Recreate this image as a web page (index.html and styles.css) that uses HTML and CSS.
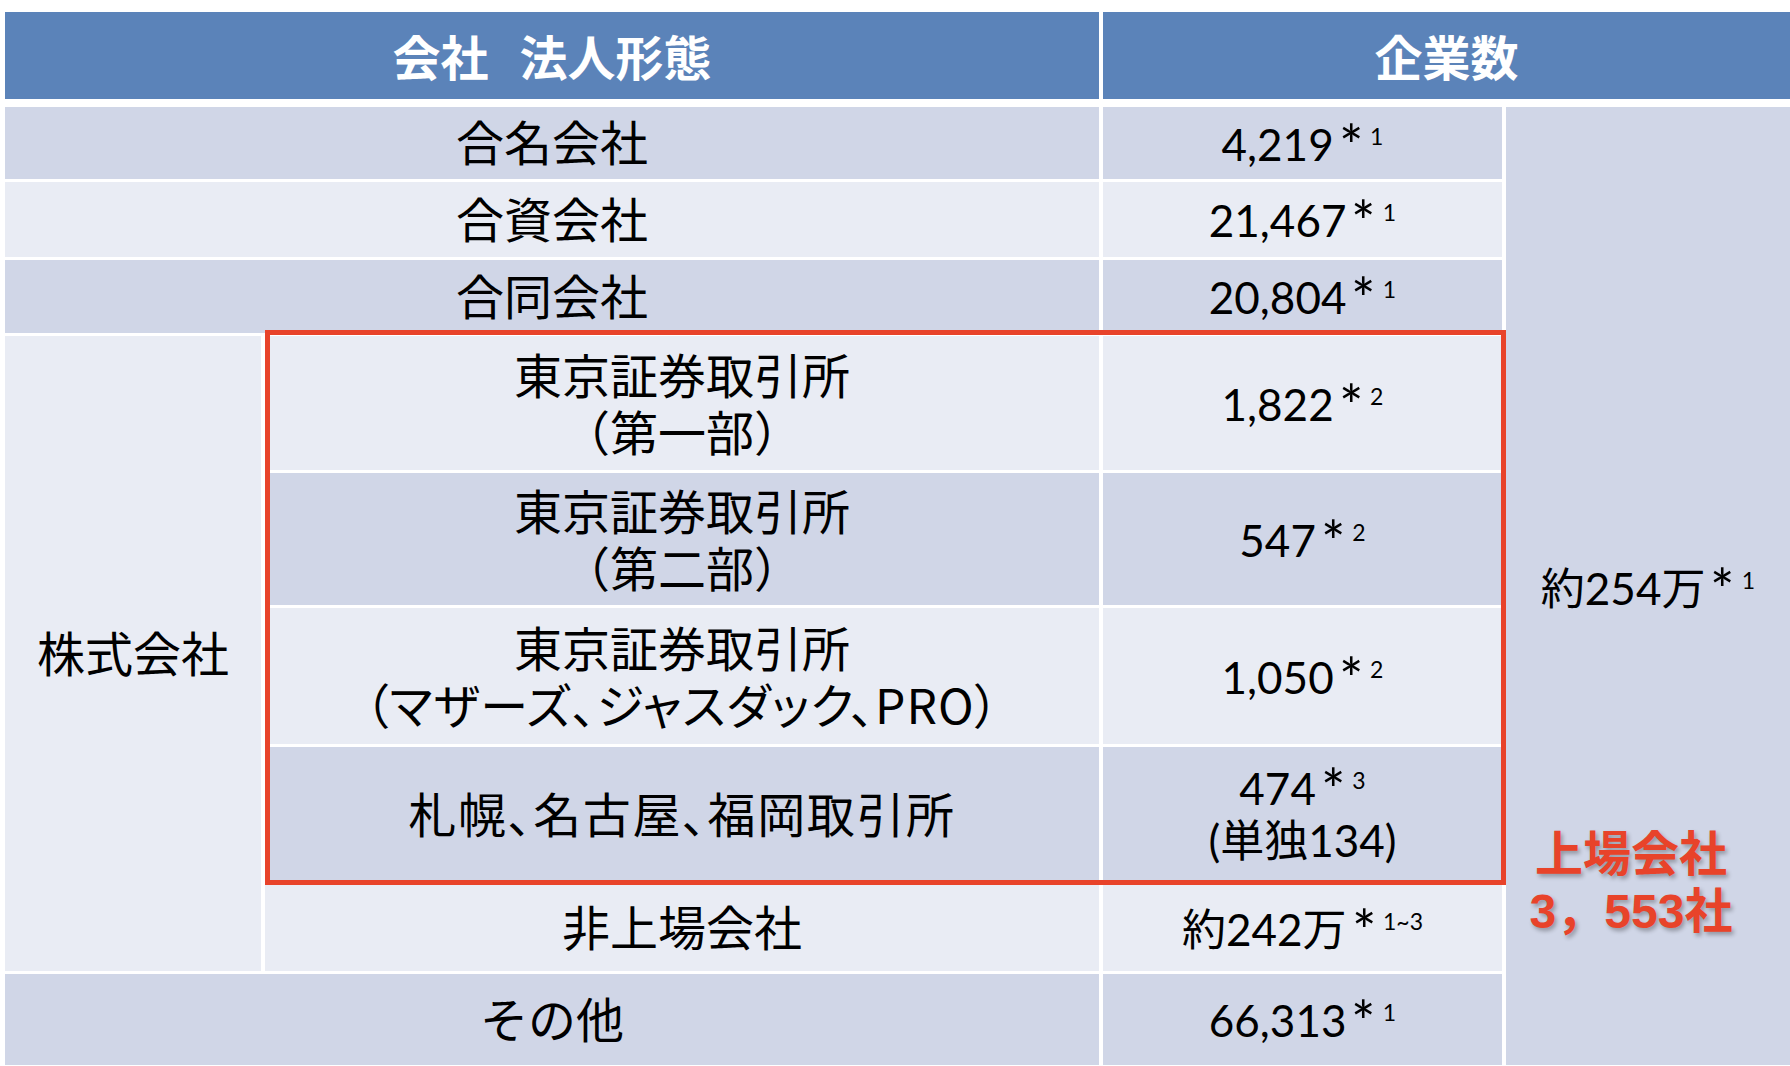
FILE: index.html
```html
<!DOCTYPE html>
<html lang="ja">
<head>
<meta charset="utf-8">
<title>会社 法人形態</title>
<link rel="stylesheet" href="styles.css">
</head>
<body>
<div class="sheet">
  <div class="head">
    <div class="hcell span2">会社 法人形態</div>
    <div class="hcell span2">企業数</div>
  </div>
  <div class="grid">
    <div class="cell jp span2 dark"><div class="in">合名会社</div></div>
    <div class="cell num dark"><div class="in">4,219<span class="ast">*</span><span class="sup">1</span></div></div>
    <div class="cell num dark total"><div class="in">約254万<span class="ast">*</span><span class="sup">1</span></div></div>

    <div class="cell jp span2 light"><div class="in">合資会社</div></div>
    <div class="cell num light"><div class="in">21,467<span class="ast">*</span><span class="sup">1</span></div></div>

    <div class="cell jp span2 dark"><div class="in">合同会社</div></div>
    <div class="cell num dark"><div class="in">20,804<span class="ast">*</span><span class="sup">1</span></div></div>

    <div class="cell jp light kabu"><div class="in">株式会社</div></div>
    <div class="cell jp two light"><div class="in">東京証券取引所<br>（第一部）</div></div>
    <div class="cell num light"><div class="in">1,822<span class="ast">*</span><span class="sup">2</span></div></div>

    <div class="cell jp two dark"><div class="in">東京証券取引所<br>（第二部）</div></div>
    <div class="cell num dark"><div class="in">547<span class="ast">*</span><span class="sup">2</span></div></div>

    <div class="cell jp two light"><div class="in">東京証券取引所<br><span class="palt">（マザーズ、ジャスダック、PRO）</span></div></div>
    <div class="cell num light"><div class="in">1,050<span class="ast">*</span><span class="sup">2</span></div></div>

    <div class="cell jp dark"><div class="in wide">札幌、名古屋、福岡取引所</div></div>
    <div class="cell num two dark"><div class="in">474<span class="ast">*</span><span class="sup">3</span><br>(単独134)</div></div>

    <div class="cell jp light"><div class="in">非上場会社</div></div>
    <div class="cell num light"><div class="in">約242万<span class="ast">*</span><span class="sup">1~3</span></div></div>

    <div class="cell jp span2 dark"><div class="in">その他</div></div>
    <div class="cell num dark"><div class="in">66,313<span class="ast">*</span><span class="sup">1</span></div></div>
  </div>
  <div class="redbox"></div>
  <div class="listed">上場会社<br>3，553社</div>
</div>
</body>
</html>
```
FILE: styles.css
```css
html, body {
  margin: 0;
  padding: 0;
  background: #ffffff;
}
body {
  width: 1790px;
  height: 1066px;
  overflow: hidden;
  font-family: "Lato", "Noto Sans CJK JP", sans-serif;
  color: #000000;
}
.sheet {
  position: relative;
  width: 1790px;
  height: 1066px;
  padding: 12px 0 0 5px;
  box-sizing: border-box;
}
.head,
.grid {
  display: grid;
  grid-template-columns: 256px 834px 399px 284px;
  column-gap: 4px;
}
.head {
  grid-template-rows: 87px;
  margin-bottom: 8px;
}
.grid {
  grid-template-rows: 72px 75px 73px 134px 132px 136px 135px 86px 91px;
  row-gap: 3px;
}
.hcell {
  background: #5b83b9;
  color: #ffffff;
  font-family: "Noto Sans CJK JP", sans-serif;
  font-weight: bold;
  font-size: 48px;
  word-spacing: 20px;
  display: flex;
  align-items: center;
  justify-content: center;
  padding-bottom: 2px;
}
.span2 {
  grid-column: span 2;
}
.cell {
  display: flex;
  align-items: center;
  justify-content: center;
  text-align: center;
}
.in {
  white-space: nowrap;
}
.dark {
  background: #d0d6e7;
}
.light {
  background: #e9ecf4;
}
.jp {
  font-family: "Noto Sans CJK JP", sans-serif;
  font-size: 48px;
  line-height: 57px;
  padding-bottom: 5px;
}
.num {
  font-size: 44px;
  line-height: 52px;
}
.jp.two,
.num.two {
  padding-bottom: 2px;
}
.total {
  grid-row: span 9;
  padding-top: 2px;
}
.kabu {
  grid-row: span 5;
}
.wide {
  font-feature-settings: "palt" 1;
  letter-spacing: 1.6px;
}
.palt {
  font-feature-settings: "palt" 1;
  letter-spacing: 1px;
}
.ast {
  display: inline-block;
  margin-left: 7px;
  margin-right: 2px;
  font-size: 48px;
  transform: scale(1.2);
  transform-origin: 50% 30%;
}
.sup {
  font-size: 23px;
  margin-left: 7px;
  vertical-align: 16px;
  line-height: 0;
}
.redbox {
  position: absolute;
  left: 265px;
  top: 330px;
  width: 1241px;
  height: 555px;
  border: 5px solid #e8432a;
  box-sizing: border-box;
  pointer-events: none;
}
.listed {
  position: absolute;
  left: 1481px;
  top: 826px;
  width: 300px;
  text-align: center;
  color: #e8432a;
  font-family: "Liberation Sans", "Noto Sans CJK JP", sans-serif;
  font-weight: bold;
  font-size: 48px;
  line-height: 57px;
  text-shadow: 2px 3px 4px rgba(0, 0, 0, 0.3);
}
```
